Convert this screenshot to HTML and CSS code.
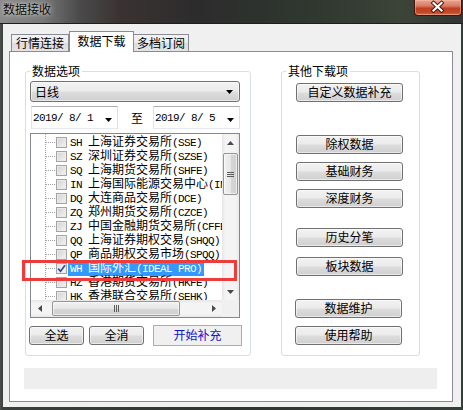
FILE: index.html
```html
<!DOCTYPE html>
<html lang="zh">
<head>
<meta charset="utf-8">
<title>数据接收</title>
<link rel="stylesheet" href="styles.css">
</head>
<body>
<div class="window">
  <div class="titlebar">
    <span class="title">数据接收</span>
    <div class="close">
      <svg width="47" height="16" viewBox="0 0 47 16">
        <path d="M19.5 4 L27.5 11.5 M27.5 4 L19.5 11.5" stroke="#3a1208" stroke-width="4" stroke-linecap="square"/>
        <path d="M19.5 4 L27.5 11.5 M27.5 4 L19.5 11.5" stroke="#ffffff" stroke-width="2.2" stroke-linecap="square"/>
      </svg>
    </div>
  </div>
  <div class="client">
    <div class="tabs">
      <div class="tab">行情连接</div>
      <div class="tab active">数据下载</div>
      <div class="tab last">多档订阅</div>
    </div>
    <div class="panel">
      <div class="groups">
        <fieldset class="group g1">
          <legend>数据选项</legend>
          <div class="combo"><span>日线</span><svg width="7" height="4"><path d="M0 0h7L3.5 4z" fill="#000"/></svg></div>
          <div class="daterow">
            <div class="datebox"><span class="en">2019/ 8/ 1</span><svg width="7" height="4"><path d="M0 0h7L3.5 4z" fill="#000"/></svg></div>
            <span class="to">至</span>
            <div class="datebox"><span class="en">2019/ 8/ 5</span><svg width="7" height="4"><path d="M0 0h7L3.5 4z" fill="#000"/></svg></div>
          </div>
          <div class="listbox">
            <div class="lmain">
              <div class="tree">
                <div class="row"><i class="conn"></i><i class="cb"></i><span class="txt"><span class="en">SH </span>上海证券交易所<span class="en">(SSE)</span></span></div>
                <div class="row"><i class="conn"></i><i class="cb"></i><span class="txt"><span class="en">SZ </span>深圳证券交易所<span class="en">(SZSE)</span></span></div>
                <div class="row"><i class="conn"></i><i class="cb"></i><span class="txt"><span class="en">SQ </span>上海期货交易所<span class="en">(SHFE)</span></span></div>
                <div class="row"><i class="conn"></i><i class="cb"></i><span class="txt"><span class="en">IN </span>上海国际能源交易中心<span class="en">(INE)</span></span></div>
                <div class="row"><i class="conn"></i><i class="cb"></i><span class="txt"><span class="en">DQ </span>大连商品交易所<span class="en">(DCE)</span></span></div>
                <div class="row"><i class="conn"></i><i class="cb"></i><span class="txt"><span class="en">ZQ </span>郑州期货交易所<span class="en">(CZCE)</span></span></div>
                <div class="row"><i class="conn"></i><i class="cb"></i><span class="txt"><span class="en">ZJ </span>中国金融期货交易所<span class="en">(CFFEX)</span></span></div>
                <div class="row"><i class="conn"></i><i class="cb"></i><span class="txt"><span class="en">QQ </span>上海证券期权交易<span class="en">(SHQQ)</span></span></div>
                <div class="row"><i class="conn"></i><i class="cb"></i><span class="txt"><span class="en">QP </span>商品期权交易市场<span class="en">(SPQQ)</span></span></div>
                <div class="row"><i class="conn"></i><i class="cb checked"><svg width="9" height="9" viewBox="0 0 9 9"><path d="M1.2 4.6 L3.6 7.2 L8 1.2" fill="none" stroke="#2b4a93" stroke-width="1.6"/></svg></i><span class="txt sel"><span class="en">WH </span>国际外汇<span class="en">(IDEAL PRO)</span></span></div>
                <div class="row"><i class="conn"></i><i class="cb"></i><span class="txt"><span class="en">HZ </span>香港期货交易所<span class="en">(HKFE)</span></span></div>
                <div class="row"><i class="conn"></i><i class="cb"></i><span class="txt"><span class="en">HK </span>香港联合交易所<span class="en">(SEHK)</span></span></div>
              </div>
              <div class="vscroll">
                <div class="arrow"><svg width="7" height="4"><path d="M0 4h7L3.5 0z" fill="#4a4a4a"/></svg></div>
                <div class="vthumb"><i></i><i></i><i></i></div>
                <div class="vspace"></div>
                <div class="arrow"><svg width="7" height="4"><path d="M0 0h7L3.5 4z" fill="#4a4a4a"/></svg></div>
              </div>
            </div>
            <div class="hrow">
              <div class="hscroll">
                <div class="harrow"><svg width="4" height="7"><path d="M4 0v7L0 3.5z" fill="#4a4a4a"/></svg></div>
                <div class="hthumb"><i></i><i></i><i></i></div>
                <div class="hspace"></div>
                <div class="harrow"><svg width="4" height="7"><path d="M0 0v7L4 3.5z" fill="#4a4a4a"/></svg></div>
              </div>
              <div class="corner"></div>
            </div>
          </div>
          <div class="btnrow">
            <div class="btn small">全选</div>
            <div class="btn small">全消</div>
            <div class="start">开始补充</div>
          </div>
        </fieldset>
        <fieldset class="group g2">
          <legend>其他下载项</legend>
          <div class="btn side b1">自定义数据补充</div>
          <div class="btn side b2">除权数据</div>
          <div class="btn side b3">基础财务</div>
          <div class="btn side b3">深度财务</div>
          <div class="btn side b4">历史分笔</div>
          <div class="btn side b5">板块数据</div>
          <div class="btn side b6 shift">数据维护</div>
          <div class="btn side b3 shift">使用帮助</div>
        </fieldset>
      </div>
      <div class="status"></div>
    </div>
  </div>
  <div class="redbox"></div>
</div>
</body>
</html>
```

FILE: styles.css
```css
* { box-sizing: border-box; }
html, body { margin: 0; padding: 0; }
body {
  width: 463px;
  height: 410px;
  overflow: hidden;
  font-family: "Noto Sans CJK SC", "Noto Sans", sans-serif;
  font-size: 12px;
  color: #000;
  background: #2b322d;
}
.window {
  position: relative;
  width: 463px;
  height: 410px;
  background: linear-gradient(to right, #4a4f4b 0, #3a403b 3px, #2e3530 50%, #33403a 100%);
}
.titlebar {
  height: 24px;
  display: flex;
  justify-content: space-between;
  align-items: flex-start;
  background: linear-gradient(to right, #8a8a8a 0, #7a7a7a 40px, #4a4a4a 80px, #3a3232 120px, #2c2c2c 200px, #303830 320px, #3c4438 400px, #343434 463px);
  border-bottom: 1px solid #1e1e1e;
}
.title {
  padding: 2px 0 0 3px;
  line-height: 14px;
  font-size: 12px;
  color: #0a0a0a;
  text-shadow: 0 0 6px rgba(255,255,255,0.7), 0 0 3px rgba(255,255,255,0.5);
}
.close {
  width: 48px;
  height: 16px;
  margin-right: 1px;
  border: 1px solid #47140a;
  border-top: 0;
  border-radius: 0 0 4px 4px;
  background: linear-gradient(#e9a695 0%, #d87a63 40%, #c13f20 55%, #c24a2a 85%, #d4765a 100%);
  box-shadow: inset 0 0 0 1px rgba(255,190,170,0.45);
  overflow: hidden;
}
.close svg { display: block; margin-top: -1px; margin-left: -1px; }

.client {
  margin: 0 2px 0 3px;
  height: 383px;
  background: #f0f0f0;
  padding: 7px 8px 0 6px;
}
.tabs {
  display: flex;
  align-items: flex-end;
  height: 20px;
  padding-left: 2px;
}
.tab {
  height: 17px;
  width: 58px;
  border: 1px solid #898c95;
  border-bottom: 0;
  background: linear-gradient(#f3f3f3, #ebebeb 50%, #dcdcdc 51%, #e4e4e4);
  text-align: center;
  line-height: 16px;
  font-size: 12px;
}
.tab.active {
  position: relative;
  z-index: 1;
  width: 65px;
  height: 21px;
  margin-bottom: -1px;
  background: #ffffff;
  line-height: 18px;
}
.tab.last { width: 56px; margin-left: -1px; }

.panel {
  height: 351px;
  border: 1px solid #898c95;
  background: #ffffff;
  padding: 12px 0 0 15px;
}
.groups {
  display: flex;
  gap: 30px;
}
.group {
  margin: 0;
  min-width: 0;
  height: 292px;
  border: 1px solid #d5dfe5;
  border-radius: 3px;
  padding: 3px 10px 0 4px;
}
.group legend {
  padding: 0 2px;
  margin-left: 0;
  line-height: 14px;
  font-size: 12px;
}
.g1 { width: 226px; }
.g2 { width: 139px; }

.combo {
  height: 21px;
  border: 1px solid #707070;
  border-radius: 3px;
  background: linear-gradient(#f2f2f2 0%, #ebebeb 48%, #dddddd 52%, #cfcfcf 100%);
  box-shadow: inset 0 0 0 1px rgba(255,255,255,0.55);
  display: flex;
  align-items: center;
  justify-content: space-between;
  padding: 0 6px 0 4px;
  line-height: 14px;
}
.combo svg { display: block; }

.daterow {
  margin-top: 4px;
  height: 23px;
  display: flex;
  align-items: center;
  justify-content: space-between;
  padding-left: 1px;
}
.datebox {
  width: 87px;
  height: 23px;
  border: 1px solid;
  border-color: #abadb3 #dbdfe6 #e3e9ef #e2e3ea;
  background: #fff;
  display: flex;
  align-items: center;
  justify-content: space-between;
  padding: 0 5px 0 1px;
}
.datebox svg { display: block; margin-top: 5px; }
.to { line-height: 14px; margin-left: 3px; }
.en {
  font-family: "Liberation Mono", "DejaVu Sans Mono", monospace;
  font-size: 11px;
  letter-spacing: -0.6px;
  white-space: pre;
}

.listbox {
  margin-top: 4px;
  height: 185px;
  width: 210px;
  border: 1px solid #828790;
  background: #fff;
  display: flex;
  flex-direction: column;
}
.lmain {
  height: 166px;
  display: flex;
}
.tree {
  width: 191px;
  overflow: hidden;
  padding-top: 1px;
  background-image: repeating-linear-gradient(to bottom, #a0a0a0 0 1px, transparent 1px 2px);
  background-size: 1px 100%;
  background-position: 14px 0;
  background-repeat: no-repeat;
}
.row {
  height: 14px;
  display: flex;
  align-items: center;
  padding-left: 15px;
  white-space: nowrap;
  line-height: 14px;
}
.conn {
  display: block;
  width: 10px;
  height: 1px;
  flex-shrink: 0;
  background-image: repeating-linear-gradient(to right, #a0a0a0 0 1px, transparent 1px 2px);
  margin-top: 1px;
}
.cb {
  display: block;
  flex-shrink: 0;
  width: 11px;
  height: 11px;
  border: 1px solid #a4a4a4;
  background: linear-gradient(135deg, #d2d2d2, #f4f4f4);
  box-shadow: inset 0 0 0 1px #eaeaea;
  margin-right: 3px;
  position: relative;
}
.cb.checked { background: linear-gradient(135deg, #e0e0e0, #fafafa); }
.cb svg { display: block; }
.txt { flex-shrink: 0; }
.txt.sel {
  background: #3399ff;
  color: #fff;
  margin-left: -2px;
  padding: 0 2px;
}

.vscroll {
  width: 17px;
  background: linear-gradient(to right, #e6e6e6, #f4f4f4 20%, #f4f4f4 80%, #e9e9e9);
  display: flex;
  flex-direction: column;
  align-items: center;
}
.arrow {
  height: 17px;
  width: 17px;
  display: flex;
  align-items: center;
  justify-content: center;
}
.vthumb {
  margin-top: 2px;
  width: 15px;
  height: 42px;
  border: 1px solid #959595;
  border-radius: 2px;
  background: linear-gradient(to right, #f2f2f2, #e6e6e6 50%, #d6d6d6 51%, #d0d0d0);
  box-shadow: inset 0 0 0 1px rgba(255,255,255,0.6);
  display: flex;
  flex-direction: column;
  align-items: center;
  justify-content: center;
  gap: 1px;
}
.vthumb i { display: block; width: 7px; height: 1px; background: #5a5a5a; }
.vspace { flex: 1; }

.hrow {
  height: 17px;
  display: flex;
}
.hscroll {
  width: 191px;
  display: flex;
  align-items: center;
  background: linear-gradient(#e6e6e6, #f4f4f4 20%, #f4f4f4 80%, #e9e9e9);
}
.harrow {
  width: 17px;
  height: 17px;
  display: flex;
  align-items: center;
  justify-content: center;
}
.hthumb {
  margin-left: 4px;
  width: 128px;
  height: 15px;
  border: 1px solid #959595;
  border-radius: 2px;
  background: linear-gradient(#f2f2f2, #e6e6e6 50%, #d6d6d6 51%, #d0d0d0);
  box-shadow: inset 0 0 0 1px rgba(255,255,255,0.6);
  display: flex;
  align-items: center;
  justify-content: center;
  gap: 1px;
}
.hthumb i { display: block; width: 1px; height: 7px; background: #5a5a5a; }
.hspace { flex: 1; }
.corner { width: 17px; background: #f0f0f0; }

.btnrow {
  margin-top: 7px;
  margin-left: -1px;
  height: 21px;
  display: flex;
  align-items: center;
}
.btn {
  flex-shrink: 0;
  height: 19px;
  border: 1px solid #707070;
  border-radius: 3px;
  background: linear-gradient(#f2f2f2 0%, #ebebeb 48%, #dddddd 52%, #cfcfcf 100%);
  box-shadow: inset 0 0 0 1px rgba(255,255,255,0.55);
  text-align: center;
  line-height: 16px;
  font-size: 12px;
}
.btn.small { width: 55px; margin-right: 5px; }
.btn.small + .btn.small { margin-right: 9px; }
.start {
  flex-shrink: 0;
  width: 89px;
  height: 21px;
  border: 1px solid #adadad;
  background: #f0f0f0;
  color: #1010c8;
  text-align: center;
  line-height: 18px;
}

.side { width: 107px; margin-left: 10px; }
.side.shift { margin-left: 9px; }
.b1 { margin-top: 2px; }
.b2 { margin-top: 33px; }
.b3 { margin-top: 8px; }
.b4 { margin-top: 20px; }
.b5 { margin-top: 10px; }
.b6 { margin-top: 23px; }

.status {
  margin-top: 12px;
  margin-left: -1px;
  width: 413px;
  height: 21px;
  background: #eeeeee;
}

.redbox {
  position: absolute;
  left: 22px;
  top: 260px;
  width: 215px;
  height: 21px;
  border: 3px solid #ee3b3b;
}
```
